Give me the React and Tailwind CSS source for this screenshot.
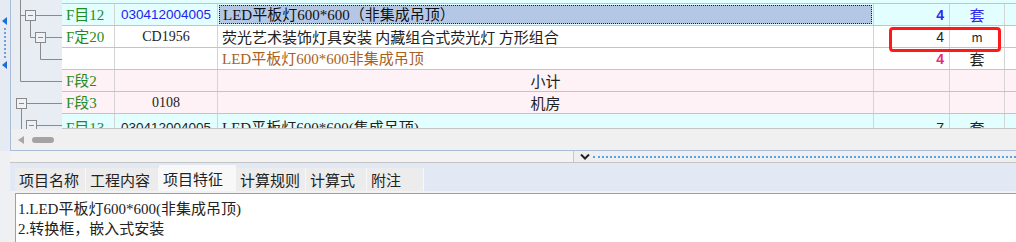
import React from "react";

const cjk = "font-['Noto_Sans_CJK_SC',sans-serif]";
const song = "font-['Liberation_Serif','Noto_Sans_CJK_SC',serif]";
const sans = "font-['Liberation_Sans','Noto_Sans_CJK_SC',sans-serif]";

const rows = [
  {
    bg: "bg-[#e3fefe]",
    code: "F目12",
    bm: "030412004005",
    bmCls: `text-[#2222ee] ${sans} text-[13.5px]`,
    name: "LED平板灯600*600（非集成吊顶）",
    nameCls: `${song} text-[#111]`,
    sel: true,
    qty: "4",
    qtyCls: "text-[#2a2aee] font-bold",
    unit: "套",
    unitCls: "text-[#2a2aee]",
  },
  {
    bg: "bg-white",
    code: "F定20",
    bm: "CD1956",
    bmCls: `text-[#222] ${song} text-[14px]`,
    name: "荧光艺术装饰灯具安装 内藏组合式荧光灯 方形组合",
    nameCls: `${cjk} text-[#222]`,
    qty: "4",
    qtyCls: "text-[#222]",
    unit: "m",
    unitCls: "text-[#222] text-[12px]",
  },
  {
    bg: "bg-white",
    code: "",
    bm: "",
    name: "LED平板灯600*600非集成吊顶",
    nameCls: `${song} text-[#a8601e]`,
    qty: "4",
    qtyCls: "text-[#e0307a] font-bold",
    unit: "套",
    unitCls: "text-[#222]",
  },
  { bg: "bg-[#fff2f7]", code: "F段2", bm: "", center: "小计" },
  {
    bg: "bg-[#fff2f7]",
    code: "F段3",
    bm: "0108",
    bmCls: `text-[#222] ${song} text-[14px]`,
    center: "机房",
  },
  {
    bg: "bg-[#e3fefe]",
    code: "F目13",
    bm: "030412004005",
    bmCls: `text-[#222] ${sans} text-[13.5px]`,
    name: "LED平板灯600*600(集成吊顶)",
    nameCls: `${song} text-[#222]`,
    qty: "7",
    qtyCls: "text-[#222]",
    unit: "套",
    unitCls: "text-[#222]",
    last: true,
  },
];

const tabs = [
  { t: "项目名称", w: "w-[71px]" },
  { t: "工程内容", w: "w-[73px]" },
  { t: "项目特征", w: "w-[77px]", active: true },
  { t: "计算规则", w: "w-[70px]" },
  { t: "计算式", w: "w-[61px]" },
  { t: "附注", w: "w-[57px]" },
];

function Row({ r }) {
  const h = r.last ? "h-[15px] items-start" : "h-[22px] items-center";
  const al = r.last ? "items-start pt-[4px]" : "items-center";
  return (
    <div className={`flex ${h} border-b border-[#c4c4c4] ${r.bg} text-[15px] leading-[20px] overflow-hidden`}>
      <div className={`w-[53px] self-stretch flex ${al} pl-[4px] border-r border-[#d4d4d4] text-[#1e8c1e] ${song} text-[15px]`}>
        {r.code}
      </div>
      <div className={`w-[103px] self-stretch flex justify-center ${al} border-r border-[#d4d4d4] ${r.bmCls || ""}`}>
        {r.bm}
      </div>
      {r.center ? (
        <>
          <div className={`w-[656px] self-stretch flex items-center justify-center border-r border-[#d4d4d4] ${cjk} text-[#222]`}>
            {r.center}
          </div>
          <div className="w-[76px] self-stretch border-r border-[#d4d4d4]" />
          <div className="w-[55px] self-stretch border-r border-[#d4d4d4]" />
        </>
      ) : (
        <>
          <div className={`w-[656px] self-stretch flex ${al} border-r border-[#d4d4d4] p-[1px]`}>
            <div
              className={`flex-1 self-stretch flex ${r.last ? "items-start" : "items-center"} pl-[3px] whitespace-nowrap ${r.nameCls} ${
                r.sel ? "bg-[#b4c8e6] border border-dotted border-[#222]" : ""
              }`}
            >
              {r.name}
            </div>
          </div>
          <div className={`w-[76px] self-stretch flex ${al} justify-end pr-[5px] border-r border-[#d4d4d4] ${sans} text-[14px] ${r.qtyCls}`}>
            {r.qty}
          </div>
          <div className={`w-[55px] self-stretch flex ${al} justify-center border-r border-[#d4d4d4] ${cjk} ${r.unitCls}`}>
            {r.unit}
          </div>
        </>
      )}
      <div className="flex-1" />
    </div>
  );
}

function Tree() {
  const c = "#8a8a8a";
  const box = (x, y) => (
    <g>
      <rect x={x + 0.5} y={y + 0.5} width="10" height="10" fill="#eef1f6" stroke={c} />
      <line x1={x + 3} y1={y + 5.5} x2={x + 8} y2={y + 5.5} stroke={c} />
    </g>
  );
  // page x offset 11
  return (
    <svg className="absolute left-0 top-0" width="51" height="129" viewBox="11 0 51 129">
      <line x1="20.5" y1="0" x2="20.5" y2="81.5" stroke={c} />
      <line x1="20.5" y1="15.5" x2="62" y2="15.5" stroke={c} />
      <line x1="30.5" y1="20" x2="30.5" y2="37.5" stroke={c} />
      <line x1="30.5" y1="37.5" x2="62" y2="37.5" stroke={c} />
      <line x1="40.5" y1="42" x2="40.5" y2="59.5" stroke={c} />
      <line x1="40.5" y1="59.5" x2="62" y2="59.5" stroke={c} />
      <line x1="20.5" y1="81.5" x2="62" y2="81.5" stroke={c} />
      <line x1="26" y1="103.5" x2="62" y2="103.5" stroke={c} />
      <line x1="21.5" y1="108" x2="21.5" y2="129" stroke={c} />
      <line x1="36" y1="125.5" x2="62" y2="125.5" stroke={c} />
      {box(25, 10)}
      {box(35, 32)}
      {box(16, 98)}
      {box(26, 120)}
    </svg>
  );
}

export default function App() {
  return (
    <div className="w-[1016px] h-[242px] flex bg-[#f0f0f0] overflow-hidden relative">
      {/* left collapse strip */}
      <div className="w-[10px] flex flex-col">
        <div className="h-[151px] bg-[#e6ebf3] flex flex-col items-center pt-[17px]">
          <svg width="6" height="8" viewBox="0 0 6 8">
            <path d="M5 0 L0 4 L5 8 Z" fill="#1a6fd8" />
          </svg>
          <div className="h-[30px] mt-[3px] border-l-2 border-dotted border-[#6aa0e0]" />
          <svg className="mt-[3px]" width="6" height="8" viewBox="0 0 6 8">
            <path d="M5 0 L0 4 L5 8 Z" fill="#1a6fd8" />
          </svg>
        </div>
        <div className="flex-1 bg-[#eef0f3]" />
      </div>

      <div className="flex-1 flex flex-col">
        {/* grid panel */}
        <div className="h-[151px] flex flex-col border-l border-b border-[#a9bdd8]">
          <div className="h-[129px] flex overflow-hidden">
            <div className="w-[51px] relative bg-[#e8edf4]">
              <Tree />
            </div>
            <div className="flex-1 flex flex-col">
              <div className="h-[4px] bg-[#e3fefe] border-b border-[#c4c4c4]" />
              {rows.map((r, i) => (
                <Row key={i} r={r} />
              ))}
            </div>
          </div>
          <div className="flex-1 flex items-center pl-[7px] gap-[7px] bg-[#f0f0f0]">
            <svg width="7" height="8" viewBox="0 0 7 8">
              <path d="M6 0 L0 4 L6 8 Z" fill="#a8a8a8" />
            </svg>
            <div className="w-[22px] h-[6px] rounded-full bg-[#a4a4a4]" />
          </div>
        </div>

        {/* splitter */}
        <div className="h-[12px] flex border-b border-[#c4c4c4]">
          <div className="w-[563px] bg-[#f3f3f3]" />
          <div className="flex-1 flex items-center bg-[#efefef] border-l border-[#c8c8c8] pl-[6px] gap-[3px]">
            <svg width="10" height="6" viewBox="0 0 10 6">
              <path d="M1 0.5 L5 4.5 L9 0.5" fill="none" stroke="#222" strokeWidth="2" />
            </svg>
            <div className="flex-1 border-t-2 border-dotted border-[#5aa2e6]" />
          </div>
        </div>

        {/* tab bar */}
        <div className="h-[28px] bg-[#e2e9f4] flex items-end pl-[5px]">
          {tabs.map((t) => (
            <div
              key={t.t}
              className={`${t.w} ${
                t.active ? "h-[26px] bg-[#f8f8f8] pt-[2px]" : "h-[23px] bg-[#ececec] border-r border-[#f8f8f8]"
              } pl-[4px] flex items-center ${cjk} text-[15px] leading-[20px] text-[#222] whitespace-nowrap`}
            >
              {t.t}
            </div>
          ))}
        </div>
        <div className="h-[2px] bg-[#f2f2f2]" />

        {/* content */}
        <div className="flex-1 flex pl-[5px]">
          <div className={`flex-1 bg-white border-l border-t border-[#a0a0a0] pl-[2px] pt-[5px] ${song} text-[15px] leading-[20px] text-[#222]`}>
            <div>1.LED平板灯600*600(非集成吊顶)</div>
            <div>2.转换框，嵌入式安装</div>
          </div>
        </div>
      </div>

      {/* red highlight */}
      <div className="absolute left-[889px] top-[27px] w-[112px] h-[25px] border-[3px] border-[#ff1a1a] rounded-[4px]" />
    </div>
  );
}
